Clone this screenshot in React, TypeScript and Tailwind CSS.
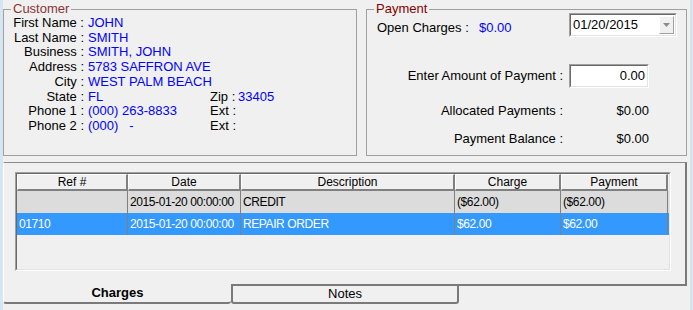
import React from 'react';

const customerRows: [string, string][] = [
    ['First Name :', 'JOHN'],
    ['Last Name :', 'SMITH'],
    ['Business :', 'SMITH, JOHN'],
    ['Address :', '5783 SAFFRON AVE'],
    ['City :', 'WEST PALM BEACH'],
];

const gridRows = [
    { ref: '', date: '2015-01-20 00:00:00', desc: 'CREDIT', charge: '($62.00)', payment: '($62.00)', selected: false },
    { ref: '01710', date: '2015-01-20 00:00:00', desc: 'REPAIR ORDER', charge: '$62.00', payment: '$62.00', selected: true },
];

const headers = ['Ref #', 'Date', 'Description', 'Charge', 'Payment'];

// sunken 3D edge, as used by text boxes and the grid
const Sunken = ({ className, children }: { className: string; children?: React.ReactNode }) => (
    <div className={`border border-t-[#a0a0a0] border-l-[#a0a0a0] border-b-white border-r-white ${className}`}>
        <div className="w-full h-full border border-t-[#696969] border-l-[#696969] border-b-[#e3e3e3] border-r-[#e3e3e3] bg-white flex items-center">
            {children}
        </div>
    </div>
);

const App = () => {
    return (
        <div className="w-[693px] h-[310px] overflow-hidden flex bg-[#f0f0f0] text-black text-[13px] font-['Liberation_Sans',Arial,sans-serif]">
            {/* window edge */}
            <div className="w-[3px] bg-[#d7e4f2]" />

            <div className="w-[684px] flex flex-col">
                {/* Top: customer + payment */}
                <div className="flex gap-[9px] mt-[2px]">
                    {/* Customer */}
                    <fieldset className="w-[354px] h-[154px] border border-[#a0a0a0]">
                        <legend className="ml-[7px] px-[2px] leading-[14px] text-[#8a3333]">Customer</legend>
                        <div className="grid grid-cols-[80px_118px_24px_1fr] gap-x-[4px] leading-[14.7px] whitespace-nowrap">
                            {customerRows.map(([label, value]) => (
                                <React.Fragment key={label}>
                                    <span className="text-right">{label}</span>
                                    <span className="col-span-3 text-[#0000ff]">{value}</span>
                                </React.Fragment>
                            ))}
                            <span className="text-right">State :</span>
                            <span className="text-[#0000ff]">FL</span>
                            <span>Zip :</span>
                            <span className="text-[#0000ff]">33405</span>

                            <span className="text-right">Phone 1 :</span>
                            <span className="text-[#0000ff]">(000) 263-8833</span>
                            <span>Ext :</span>
                            <span />

                            <span className="text-right">Phone 2 :</span>
                            <span className="text-[#0000ff] whitespace-pre">(000)   -</span>
                            <span>Ext :</span>
                            <span />
                        </div>
                    </fieldset>

                    {/* Payment */}
                    <fieldset className="w-[321px] h-[154px] border border-[#a0a0a0]">
                        <legend className="ml-[7px] px-[2px] leading-[14px] text-[#800000]">Payment</legend>

                        <div className="flex items-start h-[24px] -mt-[3px]">
                            <span className="ml-[10px] mt-[5px] w-[102px] whitespace-nowrap">Open Charges :</span>
                            <span className="mt-[5px] text-[#0000ff]">$0.00</span>
                            <Sunken className="ml-auto mr-[9px] w-[108px] h-[24px]">
                                <span className="pl-[2px] flex-1">01/20/2015</span>
                                <div className="w-[15px] h-[18px] mr-[1px] bg-[#f0f0f0] border border-t-white border-l-white border-r-[#a0a0a0] border-b-[#a0a0a0] flex items-center justify-center">
                                    <svg width="7" height="4" viewBox="0 0 7 4">
                                        <path d="M0 0h7L3.5 4z" fill="#8a8a8a" />
                                    </svg>
                                </div>
                            </Sunken>
                        </div>

                        <div className="flex items-center h-[24px] mt-[27px]">
                            <span className="w-[196px] text-right whitespace-nowrap">Enter Amount of Payment :</span>
                            <Sunken className="ml-[6px] w-[80px] h-[24px]">
                                <span className="flex-1 text-right pr-[2px]">0.00</span>
                            </Sunken>
                        </div>

                        <div className="flex items-center h-[15px] mt-[15px]">
                            <span className="w-[196px] text-right whitespace-nowrap">Allocated Payments :</span>
                            <span className="w-[86px] text-right">$0.00</span>
                        </div>

                        <div className="flex items-center h-[15px] mt-[13px]">
                            <span className="w-[196px] text-right whitespace-nowrap">Payment Balance :</span>
                            <span className="w-[86px] text-right">$0.00</span>
                        </div>
                    </fieldset>
                </div>

                {/* Tab page */}
                <div className="mt-[6px] h-[122px] border-t border-t-[#8c8c8c] border-l border-l-white border-r-2 border-r-[#7a7a7a]">
                    <div className="ml-[11px] mt-[9px] w-[656px] h-[99px] border border-t-[#a0a0a0] border-l-[#a0a0a0] border-b-white border-r-white">
                        <div className="w-full h-full border border-t-[#696969] border-l-[#696969] border-b-[#e3e3e3] border-r-[#e3e3e3] bg-[#f0f0f0]">
                            {/* header */}
                            <div className="grid grid-cols-[111px_113px_214px_106px_107px]">
                                {headers.map((h) => (
                                    <div
                                        key={h}
                                        className="h-[17px] flex items-center justify-center bg-[#f0f0f0] border-t border-l border-t-white border-l-white border-r-2 border-b-2 border-r-[#808080] border-b-[#808080] text-[12px]"
                                    >
                                        {h}
                                    </div>
                                ))}
                            </div>
                            {/* rows */}
                            {gridRows.map((r, i) => (
                                <div
                                    key={i}
                                    className={`grid grid-cols-[111px_113px_214px_106px_107px] text-[12px] tracking-[-0.4px] ${
                                        r.selected ? 'bg-[#3399ff] text-white' : 'bg-[#dcdcdc] text-black'
                                    }`}
                                >
                                    {[r.ref, r.date, r.desc, r.charge, r.payment].map((c, j) => (
                                        <div
                                            key={j}
                                            className="h-[22px] flex items-center pl-[2px] border-r border-r-[#808080] whitespace-nowrap overflow-hidden"
                                        >
                                            {c}
                                        </div>
                                    ))}
                                </div>
                            ))}
                        </div>
                    </div>
                </div>

                {/* Tabs */}
                <div className="flex h-[20px]">
                    <div className="w-[228px] border-l border-l-white border-b-2 border-b-[#7a7a7a] rounded-bl-[3px] rounded-br-[3px] flex items-center justify-center font-bold">
                        Charges
                    </div>
                    <div className="w-[228px] border-2 border-[#7a7a7a] rounded-b-[3px] flex items-center justify-center">
                        Notes
                    </div>
                    <div className="flex-1 border-t-2 border-t-[#7a7a7a]" />
                </div>
            </div>

            <div className="w-[3px]" />
            <div className="w-[3px] bg-[#d7e4f2]" />
        </div>
    );
};

export default App;
